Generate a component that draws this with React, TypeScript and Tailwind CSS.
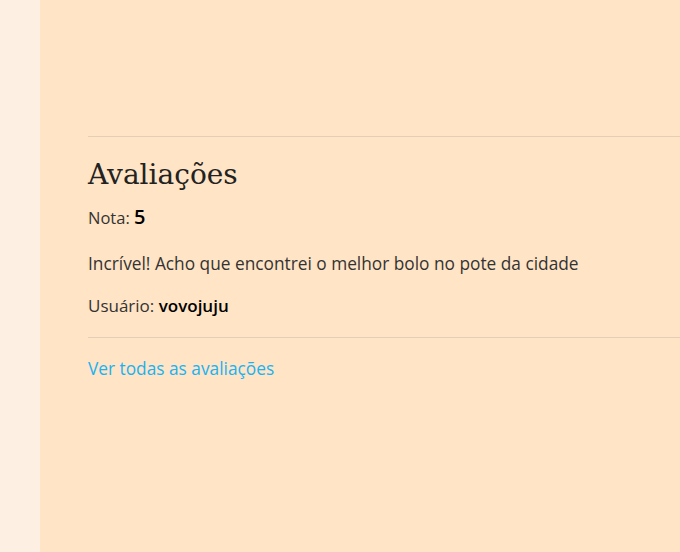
export default function App() {
  return (
    <div
      className="flex h-[552px] w-[680px] overflow-hidden bg-[#ffe4c5]"
      style={{ fontFamily: '"Open Sans", sans-serif' }}
    >
      <div className="w-[40px] shrink-0 bg-[#fdefe2]" />
      <main className="flex-1 pl-12 pt-[136px]">
        <section className="border-t border-[#e3cfb8] pt-[20px]">
          <h2
            className="text-[28px] leading-[36px] text-[#222]"
            style={{ fontFamily: '"DejaVu Serif", serif' }}
          >
            Avaliações
          </h2>
          <p className="mt-[11px] text-[16.5px] leading-[26px] text-[#333]">
            Nota: <span className="text-[20px] font-semibold text-black">5</span>
          </p>
          <p className="mt-[20px] text-[17.3px] leading-[26px] text-[#333]">
            Incrível! Acho que encontrei o melhor bolo no pote da cidade
          </p>
          <p className="mt-[16px] text-[17px] leading-[26px] text-[#333]">
            Usuário: <span className="font-semibold text-black">vovojuju</span>
          </p>
          <div className="mt-[18px] border-t border-[#e3cfb8] pt-[18px]">
            <a href="#" className="text-[17.3px] leading-[26px] text-[#1ab2f2]">
              Ver todas as avaliações
            </a>
          </div>
        </section>
      </main>
    </div>
  );
}
